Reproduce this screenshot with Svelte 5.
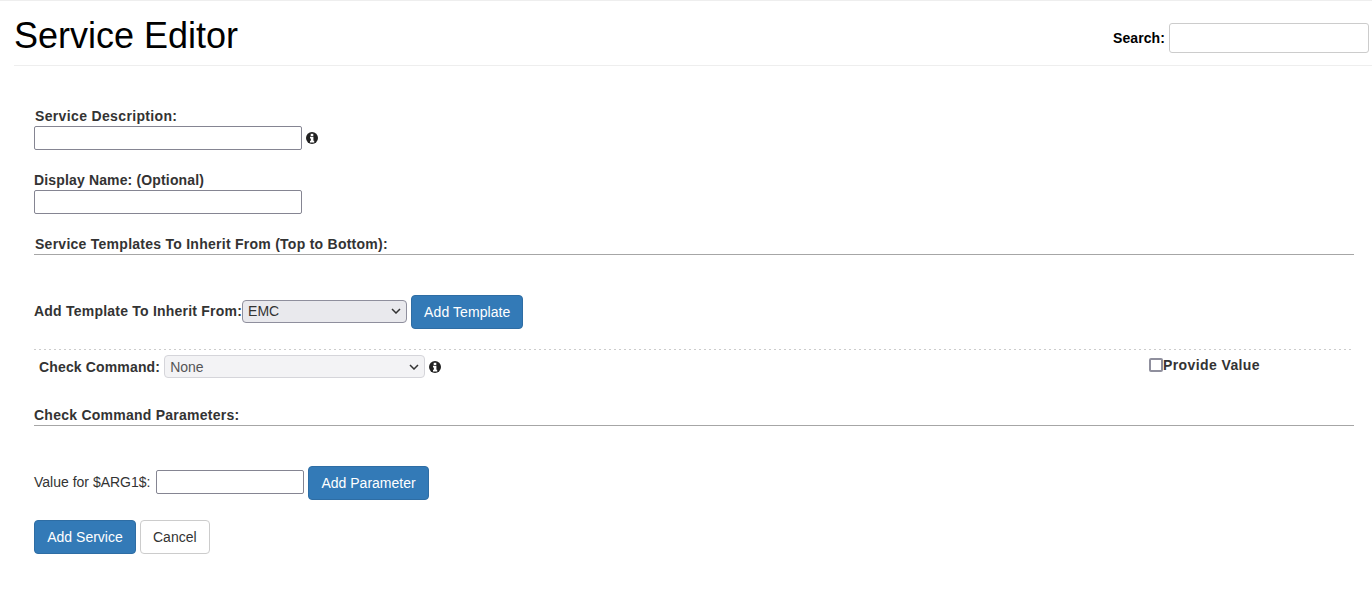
<script>
  const templates = ['EMC'];
  const commands = ['None'];
</script>

<div class="page">
  <header class="head">
    <h1>Service Editor</h1>
    <div class="search">
      <label for="search">Search:</label>
      <input id="search" type="text" />
    </div>
  </header>

  <form class="form" onsubmit={(e) => e.preventDefault()}>
    <div class="field first">
      <label class="lbl nudge" for="desc">Service Description:</label>
      <div class="line">
        <input id="desc" class="text" type="text" />
        {@render info()}
      </div>
    </div>

    <div class="field second">
      <label class="lbl tight" for="disp">Display Name: (Optional)</label>
      <input id="disp" class="text" type="text" />
    </div>

    <h2 class="section nudge-h">Service Templates To Inherit From (Top to Bottom):</h2>

    <div class="row add-template">
      <label class="lbl wide" for="tpl">Add Template To Inherit From:</label>
      <select id="tpl" class="tpl">
        {#each templates as t}<option>{t}</option>{/each}
      </select>
      <button type="button" class="btn primary template">Add Template</button>
    </div>

    <div class="check">
      <div class="check-left">
        <label class="lbl cmd-label" for="cmd">Check Command:</label>
        <select id="cmd" class="cmd" disabled>
          {#each commands as c}<option>{c}</option>{/each}
        </select>
        {@render info()}
      </div>
      <label class="provide">
        <input type="checkbox" />
        <span>Provide Value</span>
      </label>
    </div>

    <h2 class="section params">Check Command Parameters:</h2>

    <div class="row add-param">
      <label class="plain" for="arg">Value for $ARG1$:</label>
      <input id="arg" class="text arg" type="text" />
      <button type="button" class="btn primary">Add Parameter</button>
    </div>

    <div class="actions">
      <button type="submit" class="btn primary service">Add Service</button>
      <button type="button" class="btn ghost">Cancel</button>
    </div>
  </form>
</div>

{#snippet info()}
  <svg class="info" viewBox="0 0 12 12" width="12" height="12" aria-hidden="true">
    <circle cx="6" cy="6" r="6" fill="#222" />
    <rect x="4.7" y="1.8" width="2.6" height="2.2" fill="#fff" />
    <path d="M4 4.8h3.4v4h.8v1.6H4V8.8h.9V6.4H4z" fill="#fff" />
  </svg>
{/snippet}

<style>
  :global(body) {
    margin: 0;
    background: #fff;
    font-family: "Liberation Sans", Arial, sans-serif;
    font-size: 14px;
    color: #333;
  }
  .page {
    border-top: 1px solid #eee;
    height: 596px;
    overflow: hidden;
    box-sizing: border-box;
  }
  .head {
    margin: 0 0 0 14px;
    height: 64px;
    border-bottom: 1px solid #eee;
    display: flex;
    justify-content: space-between;
    align-items: flex-start;
  }
  h1 {
    margin: 15px 0 0;
    font-size: 36px;
    line-height: 40px;
    font-weight: 400;
    color: #000;
  }
  .search {
    display: flex;
    align-items: center;
    gap: 4px;
    margin: 22px 3px 0 0;
  }
  .search label {
    font-weight: 700;
    color: #000;
    letter-spacing: 0.1px;
  }
  .search input {
    width: 200px;
    height: 30px;
    box-sizing: border-box;
    border: 1px solid #ccc;
    border-radius: 3px;
    background: #fff;
    padding: 0 6px;
  }
  .form {
    padding: 0 18px 0 34px;
  }
  .lbl {
    font-weight: 700;
    letter-spacing: 0.35px;
    color: #333;
  }
  .tight { letter-spacing: 0.15px; }
  .field {
    display: flex;
    flex-direction: column;
    align-items: flex-start;
  }
  .field .lbl {
    line-height: 20px;
  }
  .first { margin-top: 40px; }
  .second { margin-top: 20px; }
  .nudge { margin-left: 1px; }
  .line {
    display: flex;
    align-items: center;
    gap: 4px;
  }
  .text {
    width: 268px;
    height: 24px;
    box-sizing: border-box;
    border: 1px solid #858592;
    border-radius: 2px;
    background: #fff;
    padding: 0 2px;
    display: block;
  }
  .info { display: block; flex: none; }
  .section {
    margin: 20px 0 0;
    font-size: 14px;
    line-height: 20px;
    font-weight: 700;
    letter-spacing: 0.26px;
    color: #333;
    border-bottom: 1px solid #a6a6a6;
  }
  .nudge-h { padding-left: 1px; }
  .row {
    display: flex;
    align-items: center;
  }
  .add-template { margin-top: 40px; }
  .wide { letter-spacing: 0.22px; margin-bottom: 2px; }
  select {
    appearance: none;
    font-family: "Liberation Sans", Arial, sans-serif;
    font-size: 14px;
    height: 23px;
    box-sizing: border-box;
    border-radius: 4px;
    padding: 0 0 0 5px;
    opacity: 1;
    background-repeat: no-repeat;
    background-position: right 5px center;
    background-size: 10px 6px;
    background-image: url("data:image/svg+xml,%3Csvg xmlns='http://www.w3.org/2000/svg' viewBox='0 0 10 6'%3E%3Cpath d='M1 1l4 4 4-4' fill='none' stroke='%23333' stroke-width='1.5'/%3E%3C/svg%3E");
  }
  .tpl {
    width: 165px;
    margin: 0 4px 2px 0;
    background-color: #e9e9ed;
    border: 1px solid #8f8f9d;
    color: #333;
  }
  .btn {
    font-family: "Liberation Sans", Arial, sans-serif;
    font-size: 14px;
    line-height: 20px;
    padding: 6px 12px;
    border-radius: 4px;
    border: 1px solid transparent;
    box-sizing: border-box;
    height: 34px;
    cursor: pointer;
  }
  .primary {
    background: #337ab7;
    border-color: #2e6da4;
    color: #fff;
  }
  .template { letter-spacing: 0.08px; }
  .service { width: 102px; padding: 6px 0; }
  .ghost {
    background: #fff;
    border-color: #ccc;
    color: #333;
  }
  .check {
    margin-top: 20px;
    padding-top: 1px;
    background: repeating-linear-gradient(90deg, #ccc 0 2px, transparent 2px 5px) top left / 100% 1px no-repeat;
    display: flex;
    justify-content: space-between;
    align-items: flex-start;
    height: 45px;
  }
  .check-left {
    display: flex;
    align-items: center;
    gap: 4px;
    margin: 5px 0 0 5px;
  }
  .cmd-label { letter-spacing: 0.15px; }
  .cmd {
    width: 261px;
    background-color: #f3f3f5;
    border: 1px solid #d5d5da;
    color: #555;
  }
  .provide {
    display: flex;
    align-items: center;
    margin: 7px 94px 0 0;
    font-weight: 700;
    letter-spacing: 0.4px;
    line-height: 16px;
  }
  .provide input {
    appearance: none;
    margin: 0 0 0 -1px;
    width: 14px;
    height: 14px;
    box-sizing: border-box;
    border: 2px solid #8f8f9d;
    border-radius: 2px;
    background: #fff;
  }
  .params { margin-top: 10px; letter-spacing: 0.25px; }
  .add-param { margin-top: 40px; gap: 4px; }
  .plain { margin: 0 2px 2px 0; }
  .arg { width: 148px; margin-bottom: 2px; }
  .actions {
    display: flex;
    gap: 4px;
    margin-top: 20px;
  }
</style>
